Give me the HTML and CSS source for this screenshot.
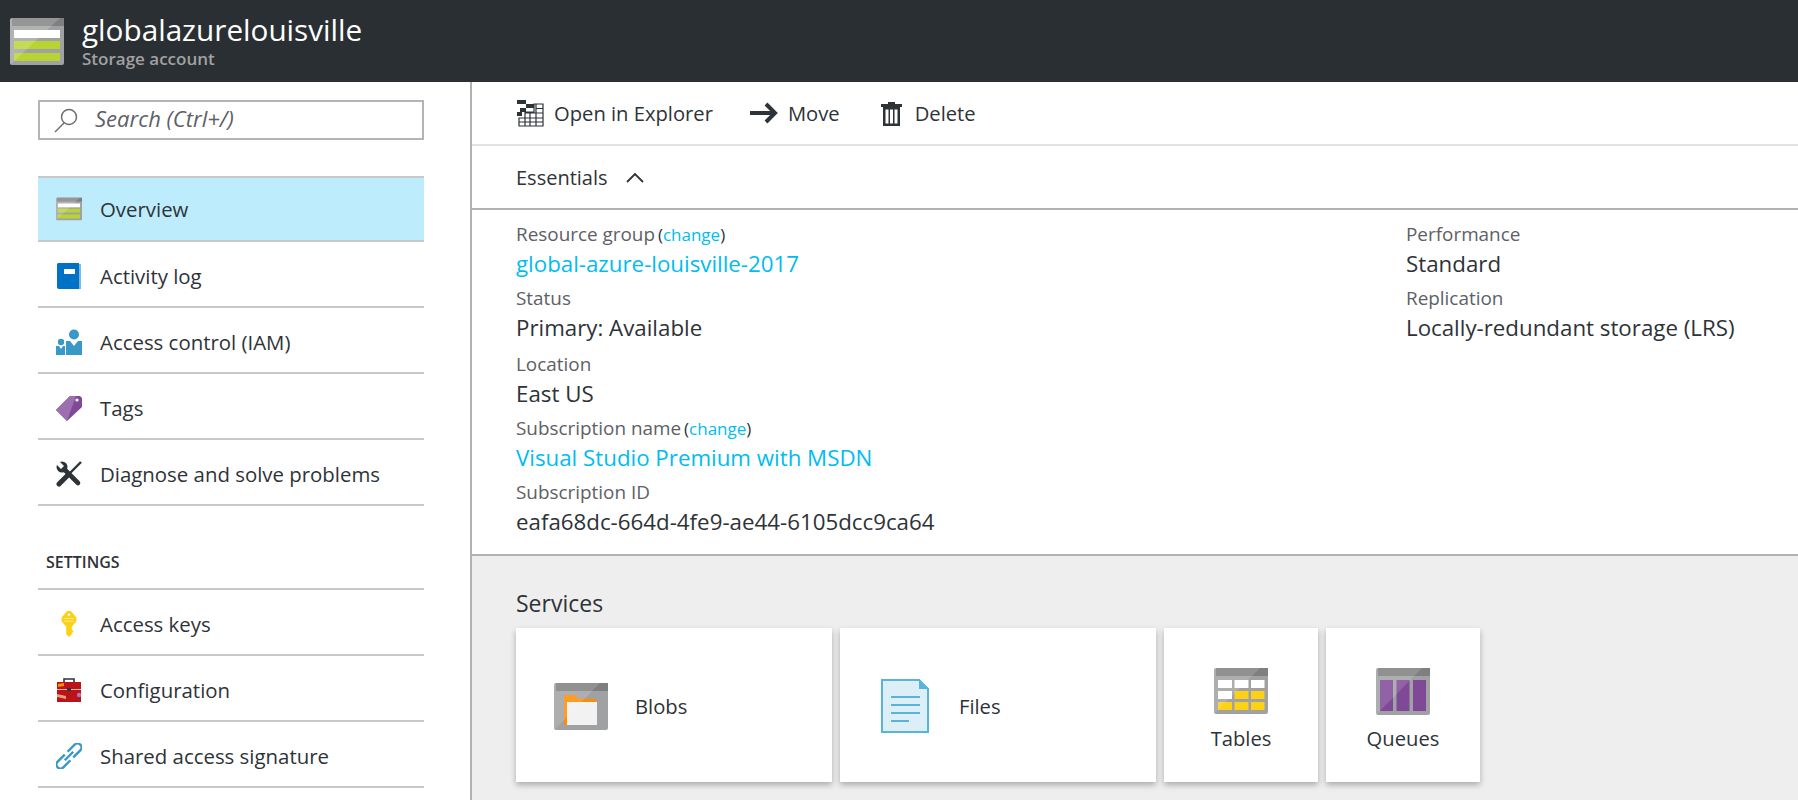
FILE: index.html
```html
<!DOCTYPE html>
<html lang="en">
<head>
    <meta charset="UTF-8">
    <title>globalazurelouisville - Storage account</title>
    <link rel="stylesheet" href="styles.css">
</head>
<body>
    <svg class="defs" width="0" height="0">
        <symbol id="storage" viewBox="0 0 54 47">
            <rect width="54" height="47" rx="2" fill="#a0a1a2"/>
            <path d="M2 0h52v8H2z" fill="#7f7f7f"/>
            <path d="M4 12h46v8H4z" fill="#fff"/>
            <path d="M4 23h46v8H4zM4 35h46v8H4z" fill="#b8d432"/>
            <path d="M0 47V2a2 2 0 0 1 2-2h48L0 47z" fill="#fff" opacity=".18"/>
        </symbol>
    </svg>

    <header class="topbar">
        <svg class="topbar-icon"><use href="#storage"/></svg>
        <div>
            <div class="topbar-title">globalazurelouisville</div>
            <div class="topbar-sub">Storage account</div>
        </div>
    </header>

    <div class="page">
        <nav class="sidebar">
            <div class="search">
                <svg class="search-icon" viewBox="0 0 26 26"><circle cx="16" cy="10" r="7.5" fill="none" stroke="#6b6f73" stroke-width="1.5"/><path d="M11 16L2 25" stroke="#6b6f73" stroke-width="1.5"/></svg>
                <span>Search (Ctrl+/)</span>
            </div>

            <ul class="menu menu-first">
                <li class="active">
                    <svg class="menu-icon"><use href="#storage"/></svg>
                    Overview
                </li>
                <li>
                    <svg class="menu-icon" viewBox="0 0 26 26"><path d="M3 1h22v25H3z" fill="#7ab8e6"/><path d="M2 0h21v26H3a2 2 0 0 1-2-2V1z" fill="#0072c6"/><path d="M8 6h11v5H8z" fill="#fff"/></svg>
                    Activity log
                </li>
                <li>
                    <svg class="menu-icon" viewBox="0 0 26 26"><circle cx="18" cy="5.5" r="5" fill="#3999c6"/><circle cx="5" cy="13" r="3.2" fill="#3999c6"/><path d="M10 12h4l4 5 4-5h4v14H10z" fill="#3999c6"/><path d="M0 17h3l2 3 2-3h2v9H0z" fill="#3999c6"/></svg>
                    Access control (IAM)
                </li>
                <li>
                    <svg class="menu-icon" viewBox="0 0 26 26"><path d="M0 15L14 1h10l2 2v9L11 26z" fill="#804998"/><path d="M0 15L14 1h6L11 26z" fill="#9b6fb0"/><circle cx="21" cy="5" r="1.6" fill="#fff"/></svg>
                    Tags
                </li>
                <li>
                    <svg class="menu-icon" viewBox="0 0 26 26"><path d="M25 1L14 12" stroke="#2e3338" stroke-width="2.4"/><path d="M11 15L3 23" stroke="#2e3338" stroke-width="5" stroke-linecap="round"/><path d="M8 8L22 22" stroke="#2e3338" stroke-width="4.6" stroke-linecap="round"/><circle cx="6" cy="6" r="5.5" fill="#2e3338"/><path d="M0 3l3-3 5 5-3 3z" fill="#fff"/></svg>
                    Diagnose and solve problems
                </li>
            </ul>

            <div class="menu-heading">SETTINGS</div>

            <ul class="menu">
                <li>
                    <svg class="menu-icon" viewBox="0 0 26 28"><path d="M11 0h4l6 7v4l-5 6v3l2 2-2 2v1l-3 3-3-3v-8l-5-6V7z" fill="#fcd116"/><path d="M8 8h10M8 11h10" stroke="#fff" stroke-width="1" opacity=".6"/><circle cx="13" cy="4" r="1.300" fill="#fff"/></svg>
                    Access keys
                </li>
                <li>
                    <svg class="menu-icon" viewBox="0 0 26 26"><path d="M8 5V2h10v3" fill="none" stroke="#2e3338" stroke-width="1.600"/><path d="M1 5h24v20H1z" fill="#ba141a"/><path d="M1 12.500h24" stroke="#f4b6a0" stroke-width="1"/><path d="M2 7l6-1v3l-6 1z" fill="#ff8c00"/><path d="M1 17l9 2v3l-9-2z" fill="#e8a07a"/><circle cx="23" cy="18" r="2.200" fill="#a67bb8"/><path d="M11 11h4v3h-4z" fill="#2e3338"/></svg>
                    Configuration
                </li>
                <li>
                    <svg class="menu-icon" viewBox="0 0 26 26"><g transform="rotate(-45 13 13)" fill="none" stroke="#3999c6" stroke-width="2.400"><path d="M11 9H1a4 4 0 0 0 0 8h10"/><path d="M15 9h10a4 4 0 0 1 0 8H15"/><path d="M7 13h12"/></g></svg>
                    Shared access signature
                </li>
            </ul>
        </nav>

        <main class="content">
            <div class="toolbar">
                <div class="tool">
                    <svg class="tool-explorer" viewBox="0 0 28 28"><path d="M1 1h9v4H1zM10 5h8v4h-8zM4 9h6v4H4zM1 13h5v4H1z" fill="#2e3338"/><path d="M20 5h7v22H3v-8h6v-6h9V5zM20 9.500h7M20 14h7M9 14h18M3 19h24M3 23h24M9 14v13M14 14v13M20 5v22M27 5v22M3 19v8" fill="none" stroke="#2e3338" stroke-width="1.200"/></svg>
                    Open in Explorer
                </div>
                <div class="tool tool-wide">
                    <svg class="tool-move" viewBox="0 0 28 22"><path d="M0 11h24M16 2l9 9-9 9" fill="none" stroke="#2e3338" stroke-width="4"/></svg>
                    Move
                </div>
                <div class="tool">
                    <svg class="tool-delete" viewBox="0 0 21 25"><path d="M7 1h7v2H7z" fill="#2e3338"/><path d="M0 3h21v3H0z" fill="#2e3338"/><path d="M2 6h17v19H2zM4.500 8.500v14h3v-14zM9 8.500v14h3v-14zM13.500 8.500v14h3v-14z" fill="#2e3338" fill-rule="evenodd"/></svg>
                    Delete
                </div>
            </div>

            <div class="essentials-head">
                Essentials
                <svg class="caret" viewBox="0 0 18 11"><path d="M1 10l8-8 8 8" fill="none" stroke="#2e3338" stroke-width="1.800"/></svg>
            </div>

            <section class="essentials">
                <div class="col col-left">
                    <div class="field">
                        <div class="label">Resource group <span class="change">(<a>change</a>)</span></div>
                        <div class="value link">global-azure-louisville-2017</div>
                    </div>
                    <div class="field">
                        <div class="label">Status</div>
                        <div class="value">Primary: Available</div>
                    </div>
                    <div class="field field-tall">
                        <div class="label">Location</div>
                        <div class="value">East US</div>
                    </div>
                    <div class="field">
                        <div class="label">Subscription name <span class="change">(<a>change</a>)</span></div>
                        <div class="value link">Visual Studio Premium with MSDN</div>
                    </div>
                    <div class="field">
                        <div class="label">Subscription ID</div>
                        <div class="value">eafa68dc-664d-4fe9-ae44-6105dcc9ca64</div>
                    </div>
                </div>
                <div class="col">
                    <div class="field">
                        <div class="label">Performance</div>
                        <div class="value">Standard</div>
                    </div>
                    <div class="field">
                        <div class="label">Replication</div>
                        <div class="value">Locally-redundant storage (LRS)</div>
                    </div>
                </div>
            </section>

            <section class="services">
                <h2>Services</h2>
                <div class="cards">
                    <div class="card card-wide">
                        <svg class="card-icon" viewBox="0 0 54 47"><rect width="54" height="47" rx="2" fill="#a0a1a2"/><path d="M2 0h52v8H2z" fill="#7f7f7f"/><path d="M10 12h11l4 4h17v3H14v23h-4z" fill="#ff8c00"/><path d="M13 19h30v23H13z" fill="#f2f2f2"/><path d="M0 47V2a2 2 0 0 1 2-2h44L0 47z" fill="#fff" opacity=".14"/></svg>
                        Blobs
                    </div>
                    <div class="card card-wide card-files">
                        <svg class="file-icon" viewBox="0 0 48 54"><path d="M1 1h37l9 9v43H1z" fill="#dceff7" stroke="#59b4d9" stroke-width="2"/><path d="M38 0l10 10H38z" fill="#59b4d9"/><path d="M10 18h29M10 26h29M10 34h29M10 42h18" stroke="#59b4d9" stroke-width="2.200"/></svg>
                        Files
                    </div>
                    <div class="card card-small">
                        <svg class="card-icon" viewBox="0 0 54 47"><rect width="54" height="46" rx="2" fill="#a0a1a2"/><path d="M2 0h52v8H2z" fill="#7f7f7f"/><path d="M4 12h14v8H4zM20.500 12h14v8h-14zM37 12h13.500v8H37zM4 23h14v8H4z" fill="#fff"/><path d="M20.500 23h14v8h-14zM37 23h13.500v8H37zM4 34h14v8H4zM20.500 34h14v8h-14zM37 34h13.500v8H37z" fill="#fcd116"/><path d="M0 46V2a2 2 0 0 1 2-2h44z" fill="#fff" opacity=".14"/></svg>
                        Tables
                    </div>
                    <div class="card card-small">
                        <svg class="card-icon" viewBox="0 0 54 47"><rect width="54" height="47" rx="2" fill="#a0a1a2"/><path d="M2 0h52v8H2z" fill="#7f7f7f"/><path d="M4 12h13v31H4zM20.500 12h13v31h-13zM37 12h13v31H37z" fill="#804998"/><path d="M0 47V2a2 2 0 0 1 2-2h44z" fill="#fff" opacity=".14"/></svg>
                        Queues
                    </div>
                </div>
            </section>
        </main>
    </div>
</body>
</html>
```

FILE: styles.css
```css
/* General */
* {
    box-sizing: border-box;
    margin: 0;
    padding: 0;
}

html, body {
    height: 800px;
    overflow: hidden;
}

body {
    font-family: "Open Sans", "Noto Sans", sans-serif;
    color: #2e3338;
    background: #fff;
}

.defs {
    display: block;
    height: 0;
}

/* Top bar */
.topbar {
    display: flex;
    align-items: center;
    height: 82px;
    padding-left: 10px;
    background: #2a2f33;
}

.topbar-icon {
    width: 54px;
    height: 47px;
    margin-right: 18px;
}

.topbar-title {
    font-size: 29.7px;
    line-height: 36px;
    color: #fff;
    margin-top: -1px;
}

.topbar-sub {
    font-size: 17px;
    line-height: 21px;
    font-weight: 600;
    color: #a0a1a2;
}

.page {
    display: flex;
    height: 718px;
}

/* Sidebar */
.sidebar {
    width: 472px;
    flex: none;
    padding: 18px 46px 0 38px;
    border-right: 2px solid #b2b2b2;
}

.search {
    display: flex;
    align-items: center;
    height: 40px;
    padding-left: 13px;
    border: 2px solid #b4b4b4;
    font-size: 22px;
    font-style: italic;
    color: #5d6166;
}

.search-icon {
    width: 26px;
    height: 26px;
    margin-right: 16px;
}

.search span {
    margin-top: -5px;
}

.menu {
    list-style: none;
    border-top: 2px solid #c8c8c8;
}

.menu-first {
    margin-top: 36px;
}

.menu li {
    display: flex;
    align-items: center;
    height: 66px;
    padding: 3px 0 0 18px;
    font-size: 20.4px;
    border-bottom: 2px solid #c8c8c8;
}

.menu li.active {
    height: 64px;
    padding-top: 0;
    background: #bdedfd;
}

.menu-icon {
    width: 26px;
    height: 26px;
    margin-right: 18px;
    flex: none;
}

.menu-heading {
    height: 82px;
    padding: 44px 0 0 8px;
    font-size: 16px;
    line-height: 24px;
    font-weight: 600;
}

/* Toolbar */
.content {
    flex: 1;
    display: flex;
    flex-direction: column;
}

.toolbar {
    display: flex;
    align-items: center;
    height: 64px;
    padding-left: 44px;
    font-size: 20.2px;
    border-bottom: 2px solid #e2e2e2;
}

.tool {
    display: flex;
    align-items: center;
    margin-right: 37px;
}

.tool-wide {
    margin-right: 41px;
}

.tool-explorer {
    width: 28px;
    height: 28px;
    margin-right: 10px;
}

.tool-move {
    width: 28px;
    height: 22px;
    margin-right: 10px;
}

.tool-delete {
    width: 21px;
    height: 25px;
    margin-right: 13px;
}

/* Essentials */
.essentials-head {
    display: flex;
    align-items: center;
    height: 64px;
    padding: 1px 0 0 44px;
    font-size: 20px;
    border-bottom: 2px solid #b2b2b2;
}

.caret {
    width: 18px;
    height: 11px;
    margin-left: 18px;
}

.essentials {
    display: flex;
    height: 346px;
    padding: 10px 0 0 44px;
    border-bottom: 2px solid #b2b2b2;
}

.col-left {
    width: 890px;
}

.field {
    height: 64px;
}

.field-tall {
    height: 66px;
    padding-top: 2px;
}

.label {
    font-size: 18.9px;
    line-height: 29px;
    color: #5d6166;
}

.change {
    font-size: 17px;
    margin-left: -2px;
    color: #2e3338;
}

.change a {
    color: #00bcf2;
}

.value {
    font-size: 22.3px;
    line-height: 29px;
}

.value.link {
    color: #00bcf2;
}

/* Services */
.services {
    flex: 1;
    padding: 31px 0 0 44px;
    background: #eee;
}

.services h2 {
    font-size: 23px;
    font-weight: 400;
    line-height: 32px;
    margin-bottom: 9px;
}

.cards {
    display: flex;
    gap: 8px;
}

.card {
    display: flex;
    align-items: center;
    height: 154px;
    background: #fff;
    font-size: 20.2px;
    box-shadow: 0 3px 6px rgba(0, 0, 0, 0.28);
}

.card-wide {
    width: 316px;
    padding: 2px 0 0 38px;
}

.card-files {
    padding-left: 41px;
}

.card-small {
    width: 154px;
    flex-direction: column;
    justify-content: flex-start;
    padding-top: 40px;
}

.card-icon {
    width: 54px;
    height: 47px;
    flex: none;
}

.card-wide .card-icon {
    margin-right: 27px;
}

.card-small .card-icon {
    margin-bottom: 9px;
}

.file-icon {
    width: 48px;
    height: 54px;
    margin-right: 30px;
}
```
